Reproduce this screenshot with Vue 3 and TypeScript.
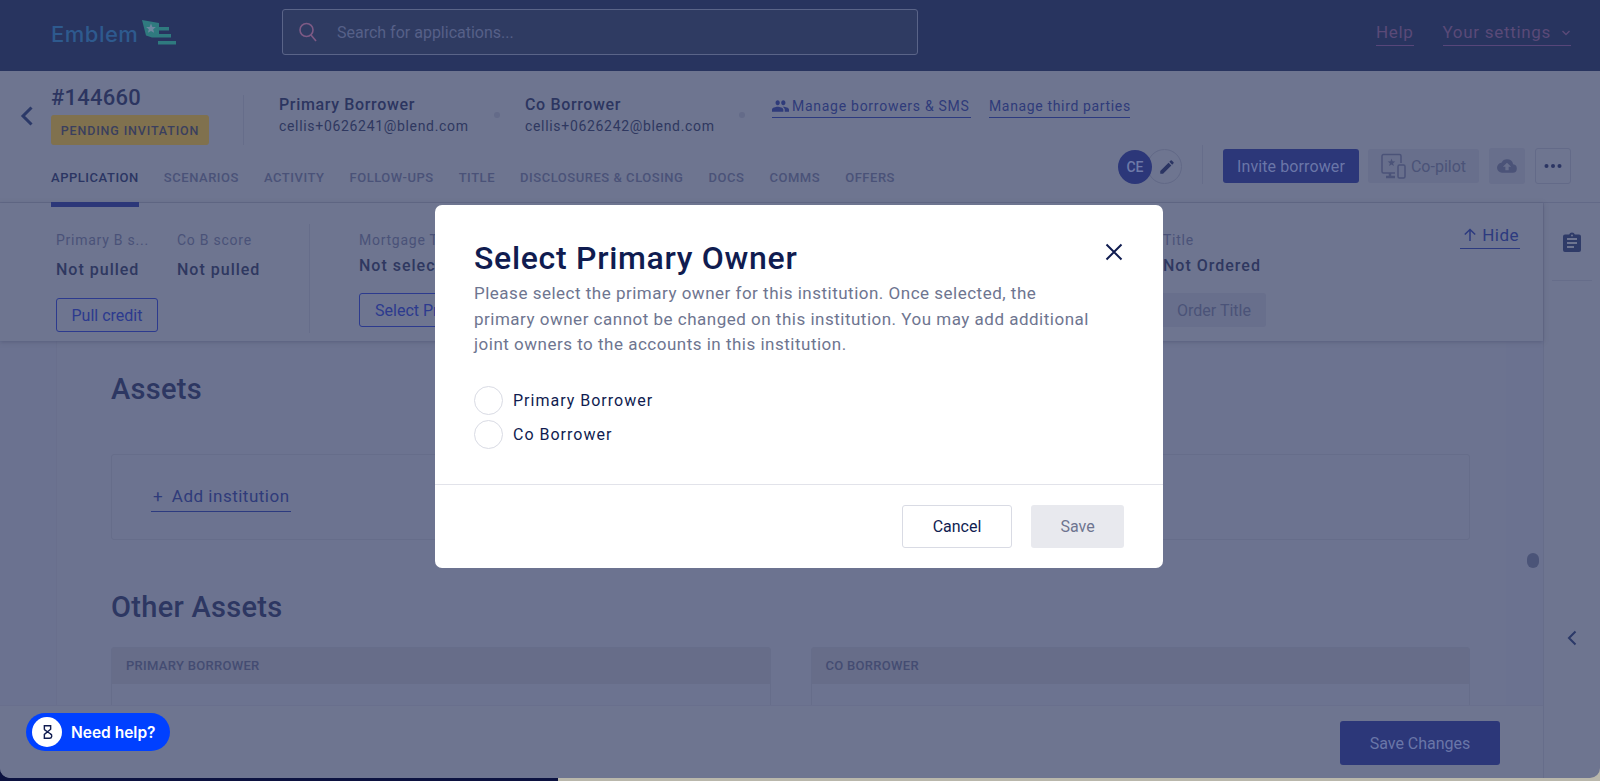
<script setup lang="ts">
const tabs: string[] = ['APPLICATION', 'SCENARIOS', 'ACTIVITY', 'FOLLOW-UPS', 'TITLE', 'DISCLOSURES & CLOSING', 'DOCS', 'COMMS', 'OFFERS']
const owners: string[] = ['Primary Borrower', 'Co Borrower']
</script>

<template>
  <div class="screen">
    <div class="page">
      <nav class="nav">
        <div class="logo">
          <span class="logo-text">Emblem</span>
          <svg class="logo-flag" width="34" height="26" viewBox="0 0 34 26">
            <path d="M0 1 L17 4 L17 8 L27 8 L27 11.500 L17 11.500 L17 15 L29 15 L29 18.500 L10 18.500 L4 16.500 Z" fill="#2f7a7f" />
            <path d="M9 4.500 L10.400 7.900 L13.900 8.100 L11.200 10.300 L12.100 13.800 L9 11.900 L5.900 13.800 L6.800 10.300 L4.100 8.100 L7.600 7.900 Z" fill="#6d87a0" />
            <rect x="16" y="22" width="18" height="3.500" fill="#2f7a7f" />
          </svg>
        </div>
        <div class="search">
          <svg width="20" height="20" viewBox="0 0 20 20" fill="none" stroke="#7d5a85" stroke-width="1.600">
            <circle cx="8.500" cy="8" r="6.500" />
            <path d="M13 13 L18 19" />
          </svg>
          <span class="placeholder">Search for applications...</span>
        </div>
        <div class="nav-right">
          <a class="nav-link">Help</a>
          <a class="nav-link">Your settings
            <svg width="10" height="6" viewBox="0 0 10 6" fill="none" stroke="#5a4a78" stroke-width="1.400"><path d="M1.500 1 L5 4.500 L8.500 1" /></svg>
          </a>
        </div>
      </nav>

      <header class="header">
        <div class="header-top">
          <svg class="back" width="14" height="20" viewBox="0 0 14 20" fill="none" stroke="#2b3968" stroke-width="3"><path d="M11.500 1.500 L3 10 L11.500 18.500" /></svg>
          <div class="app-id">
            <div class="app-number">#144660</div>
            <div class="badge">PENDING INVITATION</div>
          </div>
          <div class="vrule"></div>
          <div class="person">
            <div class="person-name">Primary Borrower</div>
            <div class="person-mail">cellis+0626241@blend.com</div>
          </div>
          <span class="dot"></span>
          <div class="person">
            <div class="person-name">Co Borrower</div>
            <div class="person-mail">cellis+0626242@blend.com</div>
          </div>
          <span class="dot second"></span>
          <a class="link manage">
            <svg width="17" height="12" viewBox="0 0 24 16" fill="#2f3b7a"><path d="M16 7c1.700 0 3-1.300 3-3.500S17.700 0 16 0s-3 1.300-3 3.500S14.300 7 16 7zM8 7c1.700 0 3-1.300 3-3.500S9.700 0 8 0 5 1.300 5 3.500 6.300 7 8 7zm0 2c-2.700 0-8 1.300-8 4v3h16v-3c0-2.700-5.300-4-8-4zm8 0h-1c1.200.900 3 2.100 3 4v3h6v-3c0-2.700-5.300-4-8-4z" /></svg>
            Manage borrowers &amp; SMS
          </a>
          <a class="link third">Manage third parties</a>
        </div>
        <div class="header-bottom">
          <div class="tabs">
            <a v-for="(t, i) in tabs" :key="t" class="tab" :class="{ active: i === 0 }">{{ t }}</a>
          </div>
          <div class="actions">
            <div class="people">
              <span class="edit">
                <svg width="18" height="18" viewBox="0 0 24 24" fill="#2b3563"><path d="M3 17.250V21h3.750L17.800 9.940l-3.750-3.750L3 17.250zM20.700 7.040a1 1 0 0 0 0-1.410l-2.340-2.340a1 1 0 0 0-1.410 0l-1.830 1.830 3.750 3.750 1.830-1.830z" /></svg>
              </span>
              <span class="avatar">CE</span>
            </div>
            <div class="vrule short"></div>
            <button class="btn primary invite">Invite borrower</button>
            <button class="btn muted copilot">
              <svg width="25" height="26" viewBox="0 0 25 26" fill="none" stroke="#4b5378" stroke-width="1.500">
                <path d="M14 20H2.500a1.500 1.500 0 0 1-1.500-1.500V3a1.500 1.500 0 0 1 1.500-1.500h16A1.500 1.500 0 0 1 20 3v7" />
                <path d="M9 20v3M5 24h9" stroke-width="2.400" />
                <rect x="17" y="12" width="7" height="13" rx="1.500" />
                <path d="M10.500 5.500l1 2.700 2.800.2-2.200 1.800.8 2.800-2.400-1.600-2.400 1.600.8-2.800-2.200-1.800 2.800-.2z" fill="#4b5378" stroke="none" />
              </svg>
              Co-pilot
            </button>
            <button class="btn square cloud">
              <svg width="20" height="20" viewBox="0 0 24 24" fill="#4b5378"><path d="M19.350 10.040A7.490 7.490 0 0 0 12 4a7.500 7.500 0 0 0-6.650 4.040A6 6 0 0 0 6 20h13a5 5 0 0 0 .35-9.960zM14 13v4h-4v-4H7l5-5 5 5h-3z" /></svg>
            </button>
            <button class="btn square more">
              <svg width="18" height="4" viewBox="0 0 18 4" fill="#2b3563"><circle cx="2.500" cy="2" r="2" /><circle cx="9" cy="2" r="2" /><circle cx="15.500" cy="2" r="2" /></svg>
            </button>
          </div>
        </div>
      </header>

      <div class="body">
        <div class="main">
          <section class="stats">
            <div class="stat score-a">
              <div class="stat-label">Primary B s...</div>
              <div class="stat-value">Not pulled</div>
              <button class="btn outline pull">Pull credit</button>
            </div>
            <div class="stat score-b">
              <div class="stat-label">Co B score</div>
              <div class="stat-value">Not pulled</div>
            </div>
            <div class="vrule stat-rule"></div>
            <div class="stat offset">
              <div class="stat-label">Mortgage Type</div>
              <div class="stat-value">Not selected</div>
              <button class="btn outline">Select Product</button>
            </div>
            <div class="stat offset title-col">
              <div class="stat-label">Title</div>
              <div class="stat-value">Not Ordered</div>
              <button class="btn muted order">Order Title</button>
            </div>
            <a class="link hide">
              <svg width="14" height="14" viewBox="0 0 14 14" fill="none" stroke="#2c3a7f" stroke-width="1.500"><path d="M7 13V1.500M1.800 6.500 7 1.500l5.200 5" /></svg>
              Hide
            </a>
          </section>

          <section class="content">
            <div class="panel">
              <h2 class="section-title">Assets</h2>
              <div class="card add-card">
                <a class="link add"><span class="plus">+</span> Add institution</a>
              </div>
              <h2 class="section-title other">Other Assets</h2>
              <div class="columns">
                <div class="card column"><div class="column-head">PRIMARY BORROWER</div></div>
                <div class="card column"><div class="column-head">CO BORROWER</div></div>
              </div>
            </div>
            <span class="thumb"></span>
          </section>

          <footer class="footer">
            <button class="btn primary save-changes">Save Changes</button>
          </footer>
        </div>

        <aside class="side">
          <div class="side-top">
            <svg width="18" height="20" viewBox="0 0 18 20" fill="#2f3b68">
              <path d="M16 2.500h-4.200C11.400 1.300 10.300.500 9 .500s-2.400.800-2.800 2H2a2 2 0 0 0-2 2V18a2 2 0 0 0 2 2h14a2 2 0 0 0 2-2V4.500a2 2 0 0 0-2-2zM9 2.500a1 1 0 1 1 0 2 1 1 0 0 1 0-2zM11 16H4v-2h7v2zm3-4H4v-2h10v2zm0-4H4V6h10v2z" />
            </svg>
          </div>
          <svg class="side-chevron" width="10" height="16" viewBox="0 0 10 16" fill="none" stroke="#2b3968" stroke-width="2"><path d="M8.500 1.500 2 8l6.500 6.500" /></svg>
        </aside>
      </div>
    </div>

    <div class="modal-layer">
      <div class="modal">
        <div class="modal-body">
          <div class="modal-title-row">
            <h1 class="modal-title">Select Primary Owner</h1>
            <svg class="close" width="18" height="18" viewBox="0 0 18 18" fill="none" stroke="#101c50" stroke-width="2"><path d="M1.500 1.500l15 15M16.500 1.500l-15 15" /></svg>
          </div>
          <p class="modal-text">Please select the primary owner for this institution. Once selected, the primary owner cannot be changed on this institution. You may add additional joint owners to the accounts in this institution.</p>
          <div class="radios">
            <label v-for="o in owners" :key="o" class="radio"><span class="radio-circle"></span>{{ o }}</label>
          </div>
        </div>
        <div class="modal-foot">
          <button class="m-btn cancel">Cancel</button>
          <button class="m-btn save">Save</button>
        </div>
      </div>
    </div>

    <button class="help">
      <span class="help-icon">
        <svg width="11" height="16" viewBox="0 0 14 20" fill="none" stroke="#101c50" stroke-width="1.800"><path d="M3 7V2h8v4.500L3 13v5h6.500a3 3 0 0 0 1-5.800L3 7" /></svg>
      </span>
      Need help?
    </button>
  </div>
</template>

<style>
html, body { margin: 0; padding: 0; background: #0c1240; overflow: hidden; }
</style>

<style scoped>
* { box-sizing: border-box; }
.screen {
  position: relative; width: 1600px; height: 781px; overflow: hidden;
  font-family: Roboto, "Liberation Sans", sans-serif;
  background: linear-gradient(to right, #0c1240 0 558px, #b9b7ab 558px);
}
.page {
  height: 778px; display: flex; flex-direction: column; overflow: hidden;
  background: #6e7590; border-radius: 0 0 10px 10px;
}
a { display: inline-block; }
button { font-family: inherit; border: 0; padding: 0; }

.nav { height: 71px; flex: none; background: #28345f; display: flex; align-items: center; padding-left: 51px; padding-right: 29px; }
.logo { width: 231px; display: flex; align-items: flex-start; align-self: flex-start; padding-top: 19px; }
.logo-text { font-family: Inter, sans-serif; font-size: 22px; line-height: 26px; margin-top: 2px; letter-spacing: .5px; color: #2e5a8e; font-weight: 500; width: 91px; }
.search { width: 636px; height: 46px; margin-top: -7px; border: 1px solid #5a6488; border-radius: 3px; background: #2f3b62; display: flex; align-items: center; padding-left: 15px; }
.placeholder { margin-left: 19px; color: #566088; font-size: 16px; letter-spacing: 0; }
.nav-right { margin-left: auto; display: flex; gap: 29px; margin-top: -5px; }
.nav-link { color: #5a4a78; font-size: 17px; letter-spacing: .7px; line-height: 22px; padding-bottom: 2px; border-bottom: 1px solid #57467a; }
.nav-link svg { margin-left: 5px; vertical-align: 2px; }

.header { flex: none; height: 132px; border-bottom: 1px solid #626987; }
.header-top { height: 77px; display: flex; align-items: flex-start; padding-left: 20px; }
.back { margin-top: 35px; margin-right: 17px; }
.app-id { width: 158px; margin-top: 14px; }
.app-number { font-size: 22px; line-height: 26px; font-weight: 500; letter-spacing: .25px; color: #2c3560; }
.badge { margin-top: 4px; height: 30px; line-height: 31px; border-radius: 3px; background: #80714e; color: #3a3f5e; font-size: 12.500px; font-weight: 500; letter-spacing: .85px; text-align: center; }
.vrule { width: 1px; background: #666d8a; flex: none; }
.header-top > .vrule { height: 50px; margin: 24px 35px 0 34px; }
.person { width: 190px; margin-top: 24px; }
.person-name { font-size: 16px; font-weight: 500; line-height: 20px; letter-spacing: .65px; color: #2c3560; white-space: nowrap; }
.person-mail { font-size: 14px; line-height: 20px; letter-spacing: .68px; color: #2f3860; margin-top: 1px; white-space: nowrap; }
.dot { width: 6px; height: 6px; margin: 41px 25px 0 25px; border-radius: 50%; background: #646b89; flex: none; }
.dot.second { margin: 41px 27px 0 24px; }
.link { color: #2f3b7a; font-size: 14px; letter-spacing: .73px; border-bottom: 1px solid #2c3a7f; white-space: nowrap; }
.manage { display: flex; align-items: center; gap: 3px; margin-top: 25px; height: 22px; padding-bottom: 1px; width: 199px; }
.third { margin-left: 18px; margin-top: 25px; height: 22px; line-height: 20px; width: 141px; letter-spacing: .65px; }

.header-bottom { height: 54px; display: flex; padding-left: 51px; padding-right: 29px; }
.tabs { display: flex; gap: 25px; height: 54px; }
.tab { position: relative; height: 54px; line-height: 60px; font-size: 13px; font-weight: 500; letter-spacing: .53px; color: #4a5278; white-space: nowrap; }
.tab.active { color: #2b3563; }
.tab.active::after { content: ""; position: absolute; left: 0; right: 0; top: 54px; height: 5px; background: #2c3779; z-index: 2; }
.actions { margin-left: auto; display: flex; align-items: flex-start; }
.people { position: relative; width: 64px; height: 36px; margin-top: 1px; }
.avatar { position: absolute; left: 0; top: 1px; width: 34px; height: 34px; border-radius: 50%; background: #2c3779; color: #6e7aa8; font-size: 14px; font-weight: 500; line-height: 34px; text-align: center; }
.edit { position: absolute; left: 29px; top: 0; width: 35px; height: 35px; border: 1px solid #626987; border-radius: 50%; display: flex; align-items: center; justify-content: center; padding-left: 4px; }
.vrule.short { height: 39px; margin: -3px 20px 0 20px; }
.btn { font-size: 16px; border-radius: 3px; display: flex; align-items: center; justify-content: center; }
.primary { background: #2c3779; color: #6a76a8; }
.invite { width: 136px; height: 34px; margin-top: 1px; letter-spacing: .1px; }
.muted { background: #686f8c; color: #4b5378; }
.copilot { width: 111px; height: 34px; margin-top: 1px; margin-left: 9px; gap: 5px; }
.square { width: 36px; height: 36px; }
.cloud { margin-left: 10px; background: #686f8c; }
.more { margin-left: 10px; border: 1px solid #636a88; background: transparent; }

.body { flex: 1; min-height: 0; display: flex; }
.main { flex: 1; min-width: 0; display: flex; flex-direction: column; position: relative; }
.side { width: 57px; flex: none; border-left: 1px solid #666d8a; display: flex; flex-direction: column; align-items: center; }
.side-top { width: 40px; height: 78px; border-bottom: 1px solid #666d8a; display: flex; justify-content: center; padding-top: 29px; }
.side-chevron { margin-top: 349px; }

.stats { height: 138px; flex: none; display: flex; padding-left: 56px; position: relative; box-shadow: 0 1px 4px rgba(70, 75, 105, .5); z-index: 1; background: #6e7590; }
.stat-label { font-size: 14px; line-height: 20px; letter-spacing: .75px; color: #4a5278; margin-top: 27px; white-space: nowrap; }
.stat-value { font-size: 16px; line-height: 22px; font-weight: 500; letter-spacing: 1px; color: #2f3860; margin-top: 9px; white-space: nowrap; }
.score-a { width: 121px; }
.score-b { width: 132px; }
.pull { width: 102px; height: 34px; margin-top: 17px; }
.outline { border: 1px solid #2c3a8e; color: #2c3a8e; background: transparent; padding: 0 14px; font-size: 16px; white-space: nowrap; }
.stat-rule { height: 109px; margin-top: 21px; margin-right: 49px; }
.offset { width: 804px; }
.offset .stat-value { margin-top: 5px; }
.offset .btn { height: 34px; margin-top: 16px; }
.offset .outline { width: 136px; }
.title-col { width: 300px; }
.order { width: 116px; margin-left: -13px; padding-left: 12px; font-size: 16px; }
.hide { position: absolute; right: 23px; top: 19px; display: flex; align-items: center; gap: 5px; font-size: 17px; letter-spacing: .5px; height: 27px; padding: 0 1px 0 3px; color: #2c3a7f; }

.content { flex: 1; min-height: 0; overflow: hidden; background: #6b7290; position: relative; padding-left: 56px; }
.panel { width: 1450px; height: 100%; padding: 0 0 0 54px; background: #6c7390; border-left: 1px solid #696f8d; }
.section-title { margin: 0; font-size: 29px; line-height: 34px; font-weight: 500; letter-spacing: .3px; color: #2d3762; }
.panel > .section-title:first-child { padding-top: 31px; height: 65px; }
.card { border: 1px solid #666d8a; border-radius: 3px; }
.add-card { width: 1359px; height: 86px; margin-top: 48px; padding: 29px 0 0 39px; }
.add { font-size: 17px; letter-spacing: .5px; height: 28px; line-height: 25px; padding: 0 1px; color: #2f3b7a; border-bottom: 1.500px solid #2c3a7f; }
.plus { margin: 0 4px 0 1px; }
.other { margin-top: 50px; }
.columns { display: flex; gap: 40px; margin-top: 23px; width: 1359px; }
.column { width: 660px; height: 120px; }
.column-head { height: 36px; line-height: 36px; background: #676d89; padding-left: 14px; font-size: 13px; font-weight: 500; letter-spacing: .3px; color: #444c72; }
.thumb { position: absolute; left: 1527px; top: 212px; width: 12px; height: 15px; border-radius: 6px; background: #4b5478; }

.footer { height: 73px; flex: none; display: flex; justify-content: flex-end; padding: 15px 43px 0 0; background: #6e7590; border-top: 1px solid #696f8d; z-index: 1; }
.save-changes { width: 160px; height: 44px; font-size: 16px; }

.modal-layer { position: absolute; inset: 0; z-index: 10; display: flex; justify-content: center; align-items: flex-start; padding-top: 205px; padding-right: 2px; }
.modal { width: 728px; height: 363px; border-radius: 7px; background: #fff; display: flex; flex-direction: column; }
.modal-body { height: 280px; padding: 0 38px 0 39px; border-bottom: 1px solid #e2e3ea; }
.modal-title-row { display: flex; justify-content: space-between; align-items: flex-start; height: 76px; padding-top: 32px; }
.modal-title { margin: 0; font-size: 32px; line-height: 42px; font-weight: 500; letter-spacing: .7px; color: #101c50; white-space: nowrap; }
.close { margin: 6px 2px 0 0; }
.modal-text { margin: 0; font-size: 17px; line-height: 25.500px; letter-spacing: .5px; color: #6e7590; width: 625px; }
.radios { margin-top: 28px; display: flex; flex-direction: column; gap: 4px; }
.radio { display: flex; align-items: center; gap: 10px; height: 30px; font-size: 16px; letter-spacing: 1px; color: #101c50; }
.radio-circle { width: 29px; height: 29px; border: 1px solid #d9dbe4; border-radius: 50%; flex: none; background: #fff; }
.modal-foot { flex: 1; display: flex; justify-content: flex-end; gap: 19px; padding: 20px 39px 0 0; }
.m-btn { height: 43px; font-size: 16px; border-radius: 3px; }
.cancel { width: 110px; background: #fff; border: 1px solid #d9dbe4; color: #101c50; }
.save { width: 93px; background: #e8e9ee; color: #6e7590; }

.help { position: absolute; z-index: 11; left: 26px; top: 713px; width: 144px; height: 38px; border-radius: 19px; background: #0040ff; color: #fff; display: flex; align-items: center; padding-left: 6px; gap: 9px; font-family: Inter, sans-serif; font-size: 15.500px; font-weight: 600; }
.help-icon { width: 30px; height: 30px; border-radius: 50%; background: #fff; display: flex; align-items: center; justify-content: center; }
</style>
